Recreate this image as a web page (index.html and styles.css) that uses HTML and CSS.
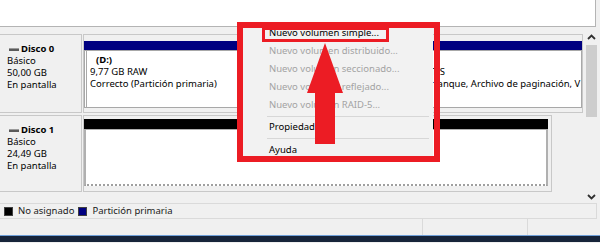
FILE: index.html
```html
<!DOCTYPE html>
<html lang="es">
<head>
    <meta charset="UTF-8"/>
    <title>Administración de discos</title>
    <link rel="stylesheet" href="styles.css">
</head>
<body>

<div class="top-pane"></div>

<div class="disk-area">
    <div class="disk-list">
        <div class="disk-row">
            <div class="disk-label">
                <div class="disk-name"><span class="drive-icon"></span>Disco 0</div>
                <div>Básico</div>
                <div>50,00 GB</div>
                <div>En pantalla</div>
            </div>
            <div class="disk-map map-0">
                <div class="part-head head-primary"></div>
                <div class="part-body">
                    <div class="partition part-d">
                        <div class="part-title">(D:)</div>
                        <div>9,77 GB RAW</div>
                        <div>Correcto (Partición primaria)</div>
                    </div>
                    <div class="partition part-c">
                        <div class="part-title">(C:)</div>
                        <div>40,22 GB NTFS</div>
                        <div>Correcto (Arranque, Archivo de paginación, V</div>
                    </div>
                </div>
            </div>
        </div>

        <div class="disk-row">
            <div class="disk-label label-1">
                <div class="disk-name"><span class="drive-icon"></span>Disco 1</div>
                <div>Básico</div>
                <div>24,49 GB</div>
                <div>En pantalla</div>
            </div>
            <div class="disk-map map-1">
                <div class="part-head head-free"></div>
                <div class="part-body body-free"></div>
            </div>
        </div>
    </div>

    <div class="scrollbar">
        <div class="scroll-btn btn-up">
            <svg width="9" height="6" viewBox="0 0 9 6"><path d="M1 5 L4.5 1.5 L8 5" fill="none" stroke="#303030" stroke-width="1.8"/></svg>
        </div>
        <div class="scroll-track"><div class="scroll-thumb"></div></div>
        <div class="scroll-btn btn-down">
            <svg width="9" height="6" viewBox="0 0 9 6"><path d="M1 1 L4.5 4.5 L8 1" fill="none" stroke="#303030" stroke-width="1.8"/></svg>
        </div>
    </div>
</div>

<div class="legend">
    <span class="swatch swatch-free"></span>No asignado
    <span class="swatch swatch-primary"></span>Partición primaria
</div>

<div class="status-bar">
    <div class="status-cell cell-main"></div>
    <div class="status-cell cell-mid"></div>
    <div class="status-cell"></div>
</div>
<div class="taskbar"></div>

<!-- context menu and the red annotations drawn over it -->
<div class="context-menu">
    <div class="menu-item">Nuevo volumen simple...</div>
    <div class="menu-item disabled">Nuevo volumen distribuido...</div>
    <div class="menu-item disabled">Nuevo volumen seccionado...</div>
    <div class="menu-item disabled">Nuevo volumen reflejado...</div>
    <div class="menu-item disabled">Nuevo volumen RAID-5...</div>
    <div class="menu-sep sep-1"></div>
    <div class="menu-item">Propiedades</div>
    <div class="menu-sep sep-2"></div>
    <div class="menu-item">Ayuda</div>
</div>
<div class="annot-frame"></div>
<div class="annot-item"></div>
<svg class="annot-arrow" width="40" height="104" viewBox="0 0 40 104">
    <polygon points="20,0 38,50 30,50 30,101 10,101 10,50 2,50" fill="#ec1c24"/>
</svg>

</body>
</html>
```

FILE: styles.css
```css
:root {
    --panel: #f0f0f0;
    --line: #c8c8c8;
    --navy: #000080;
    --red: #ec1c24;
}

* {
    margin: 0;
    padding: 0;
    box-sizing: border-box;
}

body {
    width: 600px;
    height: 243px;
    overflow: hidden;
    font-family: "Noto Sans", "Open Sans", sans-serif;
    font-size: 9.5px;
    line-height: 12px;
    color: #000;
    background-color: var(--panel);
    position: relative;
}

.top-pane {
    width: 596px;
    height: 27px;
    background-color: white;
    border-right: 1px solid #b4b4b4;
    border-bottom: 1px solid #b4b4b4;
}

.disk-area {
    display: flex;
    height: 176px;
}

.disk-list {
    flex: 1;
    display: flex;
    flex-direction: column;
    gap: 2px;
    padding-top: 7px;
}

.disk-row {
    display: flex;
    gap: 1px;
}

.disk-label {
    width: 82px;
    height: 79px;
    padding: 8px 0 0 7px;
    border: 1px solid var(--line);
    border-left: none;
    background-color: var(--panel);
}

.label-1 {
    height: 77px;
}

.disk-name {
    display: flex;
    align-items: center;
    font-weight: bold;
}

.drive-icon {
    width: 10px;
    height: 3px;
    margin: 0 2px 0 2px;
    background-color: #5a5a5a;
    border-top: 1px solid #9a9a9a;
}

.disk-map {
    border: 1px solid var(--line);
    display: flex;
    flex-direction: column;
}

.map-0 {
    width: 500px;
    height: 79px;
    padding: 6px 0 4px 0;
}

.map-1 {
    width: 469px;
    height: 77px;
    padding: 3px 3px 5px 0;
}

.part-head {
    height: 9px;
}

.head-primary {
    background-color: var(--navy);
}

.head-free {
    height: 10px;
    background-color: #000;
}

.part-body {
    flex: 1;
    display: flex;
    background-color: white;
    border: 1px solid #a8a8a8;
    overflow: hidden;
}

.body-free {
    border: 2px solid #b0b0b0;
    border-top: 1px solid #b0b0b0;
    border-bottom: 2px dotted #a0a0a0;
}

.partition {
    padding: 3px 0 0 3px;
    white-space: nowrap;
    overflow: hidden;
}

.part-d {
    width: 291px;
    border-left: 1px solid #a8a8a8;
    margin-left: 1px;
}

.part-c {
    flex: 1;
}

.part-title {
    font-weight: bold;
    padding-left: 6px;
}

.scrollbar {
    flex: 0 0 17px;
    display: flex;
    flex-direction: column;
}

.scroll-btn {
    height: 17px;
    display: flex;
    justify-content: center;
}

.btn-up {
    align-items: flex-end;
    padding-bottom: 4px;
}

.btn-down {
    align-items: center;
    padding-top: 4px;
}

.scroll-track {
    flex: 1;
    padding: 1px 3px 0 3px;
}

.scroll-thumb {
    height: 72px;
    background-color: #cdcdcd;
}

.legend {
    display: flex;
    align-items: center;
    width: 597px;
    height: 16px;
    padding-left: 4px;
    border: 1px solid #dadada;
    border-left: none;
    color: #1a1a1a;
}

.swatch {
    width: 9px;
    height: 9px;
    margin-right: 5px;
    border: 1px solid #404040;
}

.swatch-free {
    background-color: #000;
}

.swatch-primary {
    background-color: var(--navy);
    margin-left: 4px;
}

.status-bar {
    display: flex;
    height: 17px;
    border-bottom: 1px solid #6f9fd8;
}

.status-cell {
    flex: 1;
}

.cell-main {
    flex: 0 0 423px;
    border-right: 1px solid #dadada;
}

.cell-mid {
    flex: 0 0 105px;
    border-right: 1px solid #dadada;
}

.taskbar {
    height: 6px;
    background-color: #17243a;
}

.context-menu {
    position: absolute;
    left: 243px;
    top: 22px;
    width: 190px;
    height: 134px;
    padding-top: 2px;
    background-color: #f2f2f2;
}

.menu-item {
    height: 18px;
    line-height: 18px;
    padding-left: 26px;
    color: #000;
}

.menu-item.disabled {
    color: #a3a3a3;
}

.menu-sep {
    margin-left: 24px;
    margin-right: 4px;
    border-bottom: 1px solid #d7d7d7;
}

.sep-1 {
    height: 3px;
    margin-bottom: 1px;
}

.sep-2 {
    height: 3px;
    margin-bottom: 2px;
}

.annot-frame {
    position: absolute;
    left: 237px;
    top: 22px;
    width: 203px;
    height: 140px;
    border: 6px solid var(--red);
}

.annot-item {
    position: absolute;
    left: 262px;
    top: 28px;
    width: 127px;
    height: 14px;
    border: 3px solid var(--red);
    border-top-width: 2px;
}

.annot-arrow {
    position: absolute;
    left: 305px;
    top: 43px;
}
```
